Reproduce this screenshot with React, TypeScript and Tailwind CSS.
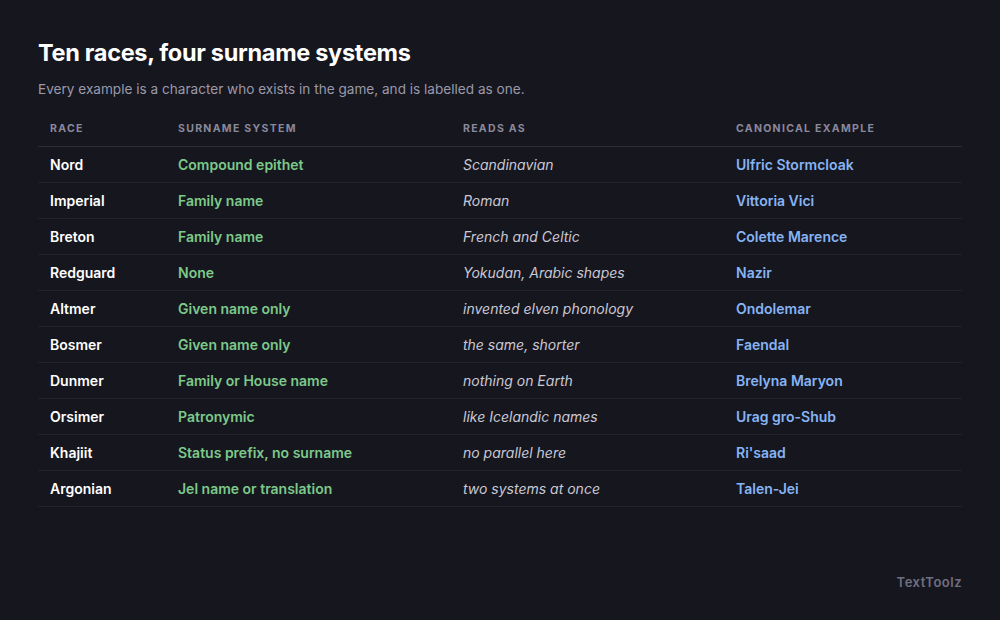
const rows = [
  ["Nord","Compound epithet","Scandinavian","Ulfric Stormcloak"],
  ["Imperial","Family name","Roman","Vittoria Vici"],
  ["Breton","Family name","French and Celtic","Colette Marence"],
  ["Redguard","None","Yokudan, Arabic shapes","Nazir"],
  ["Altmer","Given name only","invented elven phonology","Ondolemar"],
  ["Bosmer","Given name only","the same, shorter","Faendal"],
  ["Dunmer","Family or House name","nothing on Earth","Brelyna Maryon"],
  ["Orsimer","Patronymic","like Icelandic names","Urag gro-Shub"],
  ["Khajiit","Status prefix, no surname","no parallel here","Ri'saad"],
  ["Argonian","Jel name or translation","two systems at once","Talen-Jei"],
];
export default function App() {
  return (
    <div className="w-[1000px] h-[620px] bg-[#16161e] flex flex-col px-[38px] pt-[37px] pb-[28px]" style={{fontFamily:"Inter, 'Noto Sans', sans-serif"}}>
      <h1 className="text-[23.5px] leading-[32px] font-bold text-white tracking-[-0.3px]">Ten races, four surname systems</h1>
      <p className="text-[13.6px] text-[#9a99ab] mt-[10px] leading-[20px]">Every example is a character who exists in the game, and is labelled as one.</p>
      <div className="mt-[12px] w-[924px]">
        <div className="grid grid-cols-[140px_285px_273px_1fr] h-[36px] items-center border-b border-[#2c2c3a] text-[10.5px] font-bold tracking-[1.3px] text-[#8a899c]">
          <div className="pl-[12px]">RACE</div><div>SURNAME SYSTEM</div><div>READS AS</div><div>CANONICAL EXAMPLE</div>
        </div>
        {rows.map((r) => (
          <div key={r[0]} className="grid grid-cols-[140px_285px_273px_1fr] h-[36px] items-center border-b border-[#23232f] text-[14px]">
            <div className="pl-[12px] font-semibold text-white">{r[0]}</div>
            <div className="font-semibold text-[#7cc98a]">{r[1]}</div>
            <div className="italic text-[#c9c8d4]">{r[2]}</div>
            <div className="font-semibold text-[#86b4f5]">{r[3]}</div>
          </div>
        ))}
      </div>
      <div className="mt-auto self-end text-[13px] font-semibold text-[#6f6e80] tracking-[0.5px]">TextToolz</div>
    </div>
  );
}
